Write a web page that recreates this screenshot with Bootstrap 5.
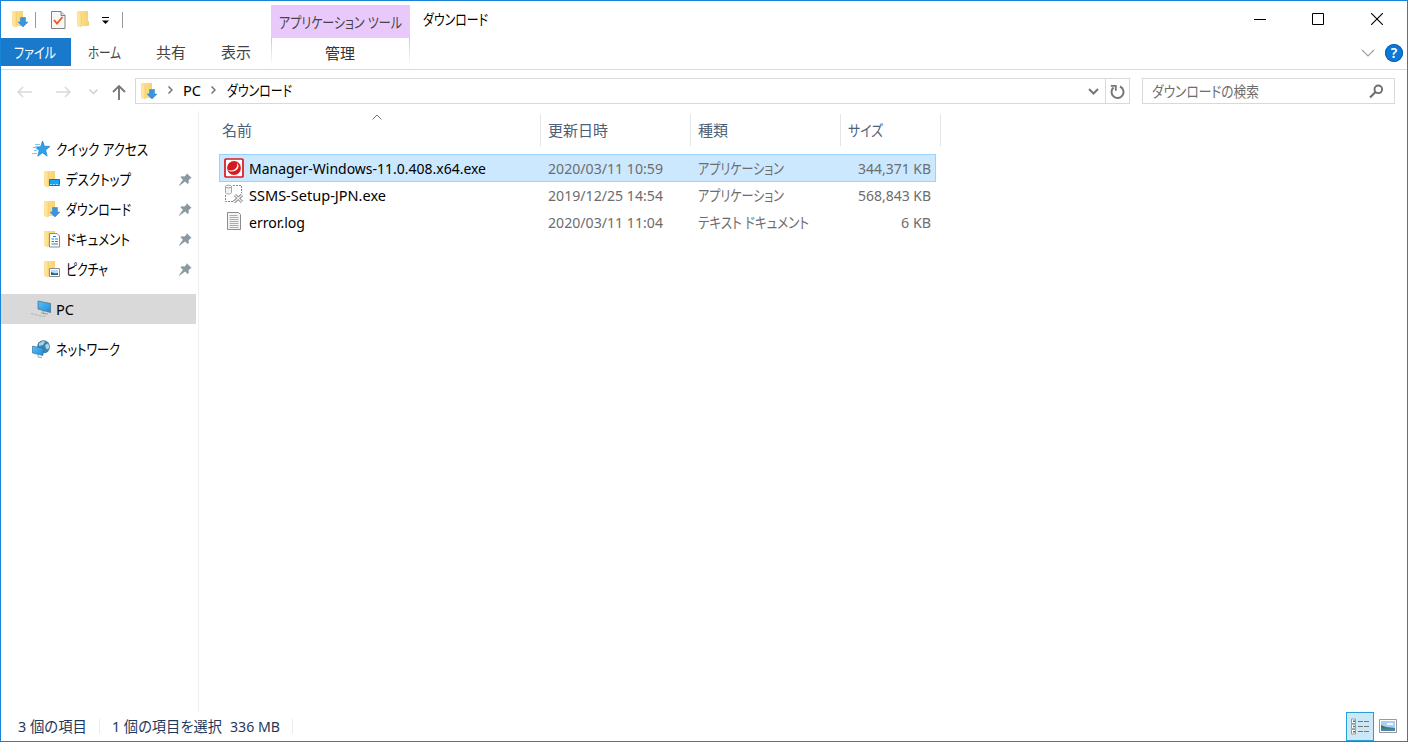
<!DOCTYPE html>
<html lang="ja">
<head>
<meta charset="utf-8">
<title>ダウンロード</title>
<link href="https://cdn.jsdelivr.net/npm/bootstrap@5.3.0/dist/css/bootstrap.min.css" rel="stylesheet">
<style>
body{font-family:"Noto Sans","Noto Sans CJK JP",sans-serif;font-size:15px;font-weight:400;line-height:20px;color:#000;background:#fff}
svg{display:block;flex:none}
.window{width:1408px;height:742px;border:1px solid #1883d7;overflow:hidden}
.fit{display:inline-block;white-space:pre;transform-origin:0 50%;font-feature-settings:"palt";flex:none}
.slot{display:block;flex:none;height:20px;white-space:nowrap}
.top-area{height:69px;border-bottom:1px solid #dadbdc}
.left-top{width:270px}
.quick{height:37px;padding-left:11px}
.bar{width:1px;height:16px;background:#999}
.gap-a{margin-left:6px}.gap-b{margin-left:15px}.gap-c{margin-left:12px}
.tabs{height:28px;color:#444}
.file-tab{width:70px;height:28px;background:#1979ca;color:#fff;padding:4px 0 0 13px}
.tool-group{width:139px}
.tool-title{height:33px;margin-top:4px;background:#e9c9fc;color:#444;padding:7px 0 0 8px}
.tool-tab{height:27px;padding:5px 0 0 53px;color:#333;border:solid;border-width:0 1px;border-image:linear-gradient(#c8c8c8,#fff) 1}
.win-buttons{height:36px}
.help{width:18px;height:18px;border-radius:50%;background:#0b78d7;box-shadow:inset 0 0 0 1px #075fae;color:#fff;font-weight:600;font-size:14px;line-height:18px}
.address-row{height:41px;padding-top:8px}
.boxed{height:26px;border:1px solid #d9d9d9}
.address{width:995px}
.address .slot{margin-top:-2px}
.refresh{width:24px;height:24px;border-left:1px solid #d9d9d9}
.search{width:253px;color:#6d6d6d}
.content{height:601px}
.side{width:198px;padding-top:23px;border-right:1px solid #f0f0f0;height:601px}
.side-row{height:30px;width:195px}
.side-row.selected{background:#d9d9d9}
.files{width:740px;margin-left:20px}
.heads{height:35px;color:#4c607a;padding-top:3px;margin-bottom:8px}
.head{height:32px;border-right:1px solid #e5e5e5;width:150px;padding:6px 0 0 7px}
.head-name{width:322px;padding-left:3px}
.head-size{width:100px}
.sort-mark{left:153px;top:0}
.file-row{height:27px;width:717px;border:1px solid transparent;color:#6d6d6d;padding:0 4px}
.file-row.selected{height:28px;background:#cce8ff;border-color:#99d1ff;margin-bottom:-1px}
.c-icon{width:25px}.c-name{width:299px;color:#000}.c-date{width:150px}.c-type{width:150px}
.status{height:29px;color:#1e395b;padding-left:17px}
.status .slot{height:22px}
.tick{width:1px;height:15px;background:#ececec}
.view-on{width:28px;height:29px;background:#cce8f6;border:1px solid #26a0da}
</style>
</head>
<body>
<svg width="0" height="0" class="position-absolute">
<defs>
<linearGradient id="gf" x1="0" x2="1"><stop offset="0" stop-color="#fde39a"/><stop offset="1" stop-color="#f6d06c"/></linearGradient>
<linearGradient id="gs" x1="0" y1="0" x2="1" y2="1"><stop offset="0" stop-color="#5cc0f8"/><stop offset="1" stop-color="#1590e0"/></linearGradient>
<symbol id="folder" viewBox="0 0 17 17"><path d="M0 0h11v10h1v5H1z" fill="url(#gf)"/><path d="M0 0l4 1.500v15L0 15z" fill="#fde49a"/><path d="M4.200 1.500V16" stroke="#efc960" stroke-width=".7"/></symbol>
<symbol id="downfolder" viewBox="0 0 17 17"><use href="#folder" width="17" height="17"/><path d="M8.500 6.500h5V11H16l-5 5-5-5h2.500z" fill="#3b94dd" stroke="#2c7fca" stroke-width=".5"/></symbol>
<symbol id="pin" viewBox="0 0 12 12"><path d="M7.200.3l4.500 4.300-1.300.5-1.500 1.600.1 2.500-1 1-2.400-2.300L.4 11.800 0 11.400l3.600-5.100-2.200-2.400 1-.8 2.700.1 1.600-1.500z" fill="#8b99a3"/></symbol>
</defs>
</svg>
<div class="window d-flex flex-column">
  <header class="top-area d-flex">
    <div class="left-top">
      <div class="quick d-flex align-items-center">
        <svg width="17" height="17"><use href="#downfolder"/></svg>
        <span class="bar gap-a"></span>
        <svg width="15" height="18" class="gap-b" viewBox="0 0 15 18"><path d="M.5.500h9.500l4 4v13H.5z" fill="#f7f7f7" stroke="#828282"/><path d="M10 .5v4h4" fill="#ddd" stroke="#828282"/><path d="M3 9l3 3.500 5.500-6.500" fill="none" stroke="#f05a22" stroke-width="1.900"/></svg>
        <svg width="17" height="17" style="margin-left:11px"><use href="#folder"/></svg>
        <svg width="8" height="8" style="margin-left:8px;margin-top:2px"><path d="M0 .5h7" stroke="#000"/><path d="M0 3.500h7L3.500 7z"/></svg>
        <span class="bar gap-c"></span>
      </div>
      <div class="tabs d-flex">
        <div class="file-tab"><span class="fit" data-w="42">ファイル</span></div>
        <div class="slot" style="margin:4px 0 0 17px;width:68px"><span class="fit" data-w="33">ホーム</span></div>
        <div class="slot" style="margin-top:4px;width:65px"><span class="fit" data-w="30">共有</span></div>
        <div class="slot" style="margin-top:4px"><span class="fit" data-w="30">表示</span></div>
      </div>
    </div>
    <div class="tool-group">
      <div class="tool-title"><span class="fit" data-w="123">アプリケーション ツール</span></div>
      <div class="tool-tab"><span class="fit" data-w="30">管理</span></div>
    </div>
    <div class="slot" style="margin:8px 0 0 13px"><span class="fit" data-w="65">ダウンロード</span></div>
    <div class="ms-auto">
      <div class="win-buttons d-flex align-items-center justify-content-end" style="padding-right:24px">
        <svg width="12" height="13"><path d="M0 6.500h12" stroke="#000"/></svg>
        <svg width="12" height="12" style="margin-left:46px"><path d="M.5.500h11v11H.5z" fill="none" stroke="#000"/></svg>
        <svg width="12" height="12" style="margin-left:47px"><path d="M0 0l12 12M12 0L0 12" stroke="#000" stroke-width="1.100"/></svg>
      </div>
      <div class="d-flex align-items-center justify-content-end" style="padding:7px 4px 0 0">
        <svg width="14" height="8" style="margin-right:10px"><path d="M1 1l6 6 6-6" fill="none" stroke="#a0a0a0" stroke-width="1.200"/></svg>
        <span class="help text-center">?</span>
      </div>
    </div>
  </header>
  <div class="address-row d-flex">
    <div class="d-flex align-items-center" style="width:134px;height:28px;padding-left:16px">
      <svg width="15" height="12"><path d="M15 6H1M6 1L1 6l5 5" fill="none" stroke="#d8d8d8" stroke-width="1.500"/></svg>
      <svg width="15" height="12" style="margin-left:24px"><path d="M0 6h14M9 1l5 5-5 5" fill="none" stroke="#d8d8d8" stroke-width="1.500"/></svg>
      <svg width="9" height="6" style="margin-left:18px"><path d="M.5.500l4 4 4-4" fill="none" stroke="#d0d0d0" stroke-width="1.500"/></svg>
      <svg width="14" height="16" style="margin-left:14px"><path d="M7 16V2M1 8l6-6 6 6" fill="none" stroke="#777" stroke-width="1.900"/></svg>
    </div>
    <div class="boxed address d-flex align-items-center">
      <svg width="17" height="17" style="margin-left:5px"><use href="#downfolder"/></svg>
      <svg width="5" height="8" style="margin:-2px 0 0 10px"><path d="M.5.500L4 4 .5 7.500" fill="none" stroke="#777" stroke-width="1.500"/></svg>
      <div class="slot" style="margin-left:10px;width:28px"><span class="fit" data-w="18">PC</span></div>
      <svg width="5" height="8" style="margin-top:-2px"><path d="M.5.500L4 4 .5 7.500" fill="none" stroke="#777" stroke-width="1.500"/></svg>
      <div class="slot" style="margin-left:11px"><span class="fit" data-w="65">ダウンロード</span></div>
      <svg width="11" height="8" class="ms-auto" style="margin-right:6px;margin-top:2px"><path d="M1 1l4.500 4.500L10 1" fill="none" stroke="#777" stroke-width="2"/></svg>
      <div class="refresh d-flex align-items-center justify-content-center"><svg width="15" height="15"><path d="M10 2.500A6 6 0 1 1 3.500 3.500" fill="none" stroke="#777" stroke-width="2"/><path d="M.8 1.800h5v5" fill="none" stroke="#777" stroke-width="1.800"/></svg></div>
    </div>
    <div class="boxed search d-flex align-items-center" style="margin-left:12px">
      <div class="slot" style="margin-left:9px"><span class="fit" data-w="107">ダウンロードの検索</span></div>
      <svg width="15" height="15" class="ms-auto" style="margin-right:10px"><circle cx="9.300" cy="5.300" r="3.800" fill="none" stroke="#6d6d6d" stroke-width="1.900"/><path d="M6.500 8L1 13.500" stroke="#6d6d6d" stroke-width="2.200"/></svg>
    </div>
  </div>
  <main class="content d-flex">
    <nav class="side">
      <div class="side-row d-flex align-items-center" style="padding-left:31px">
        <svg width="18" height="16"><path d="M10.500 0l1.900 5.200 5.600.2-4.400 3.700 1.600 6-4.800-3.300-4.700 3.400 1.600-5.800-4.100-3.300 5.500-.3z" fill="#2da2ec" stroke="#1180cb" stroke-width=".7"/><path d="M3 3.500h5M1 6.500h4M2 9.500h3M0 12.500h5" stroke="#81c6f3"/></svg>
        <div class="slot" style="margin-left:6px"><span class="fit" data-w="92">クイック アクセス</span></div>
      </div>
      <div class="side-row d-flex align-items-center" style="padding-left:43px">
        <svg width="17" height="17"><use href="#folder"/><path d="M5.500 8.500h10v6h-10z" fill="#17a4fa" stroke="#0b73b8"/><path d="M6 13.500h9.500" stroke="#b2e0fc" stroke-dasharray="2 1"/></svg>
        <div class="slot" style="margin-left:5px;width:113px"><span class="fit" data-w="65">デスクトップ</span></div><svg width="13" height="13"><use href="#pin"/></svg>
      </div>
      <div class="side-row d-flex align-items-center" style="padding-left:43px">
        <svg width="17" height="17"><use href="#downfolder"/></svg>
        <div class="slot" style="margin-left:5px;width:113px"><span class="fit" data-w="65">ダウンロード</span></div><svg width="13" height="13"><use href="#pin"/></svg>
      </div>
      <div class="side-row d-flex align-items-center" style="padding-left:43px">
        <svg width="17" height="17"><use href="#folder"/><path d="M5.500 2.500h7.500l2.500 2.500v11h-10z" fill="#fff" stroke="#8b8b8b"/><path d="M9 5.500h3M7.500 8h2.500M11 8h3M7.500 10.500h2.500M11 10.500h3M7.500 13h6.500" stroke="#2584cc" stroke-width="1.200"/></svg>
        <div class="slot" style="margin-left:5px;width:113px"><span class="fit" data-w="64">ドキュメント</span></div><svg width="13" height="13"><use href="#pin"/></svg>
      </div>
      <div class="side-row d-flex align-items-center" style="padding-left:43px">
        <svg width="17" height="17"><use href="#folder"/><path d="M5.500 7.500h10v8h-10z" fill="#fff" stroke="#8b8b8b"/><path d="M7 9h7v5H7z" fill="#b8dcf8"/><path d="M7 11l4 1.500 3-.5v2H7z" fill="#2c6289"/></svg>
        <div class="slot" style="margin-left:5px;width:113px"><span class="fit" data-w="42">ピクチャ</span></div><svg width="13" height="13"><use href="#pin"/></svg>
      </div>
      <div class="side-row selected d-flex align-items-center" style="margin-top:10px;padding-left:30px">
        <svg width="20" height="18"><path d="M7 1l12.500 2.500v9L7 9z" fill="url(#gs)" stroke="#54718a" stroke-width=".8"/><path d="M12 11l1 2.500-3-.5m3 .5l4 .5" fill="none" stroke="#8f9ba5"/><path d="M0 13.500l12 3 3-1" fill="none" stroke="#a9b3ba" stroke-dasharray="3 1"/></svg>
        <div class="slot" style="margin-left:5px"><span class="fit" data-w="18">PC</span></div>
      </div>
      <div class="side-row d-flex align-items-center" style="margin-top:10px;padding-left:31px">
        <svg width="18" height="18"><circle cx="11.500" cy="6.800" r="6.500" fill="#3e82ad"/><path d="M7 3.500l4-2.500 2 1-2 3-4 1zM13 5l3-1.500 1.500 3-1.500 3-2-1z" fill="#a8d6e6"/><path d="M.5 6l10.500 2.500v7L.5 13z" fill="url(#gs)" stroke="#41769e" stroke-width=".7"/><path d="M6 14.500v2.500l4 .5" fill="none" stroke="#9aa7b0"/></svg>
        <div class="slot" style="margin-left:6px"><span class="fit" data-w="64">ネットワーク</span></div>
      </div>
    </nav>
    <section class="files">
      <div class="heads d-flex">
        <div class="head head-name position-relative"><span class="fit" data-w="30">名前</span><svg width="10" height="6" class="position-absolute sort-mark"><path d="M.5 5.500L5 1l4.500 4.500" fill="none" stroke="#777"/></svg></div>
        <div class="head"><span class="fit" data-w="60">更新日時</span></div>
        <div class="head"><span class="fit" data-w="30">種類</span></div>
        <div class="head head-size"><span class="fit" data-w="35">サイズ</span></div>
      </div>
      <div class="file-row selected d-flex align-items-center">
        <div class="c-icon"><svg width="20" height="20"><rect x="1" y="1" width="18" height="18" rx="1" fill="#fff" stroke="#d71920" stroke-width="1.700"/><circle cx="10" cy="10" r="6.900" fill="#d71920"/><path d="M3 11.200c3.500 2.600 9.300 1.200 10.200-3.700.2-1.200-.1-2-.7-2.800 2.300 1.300 2.600 3.800 1.300 5.800-2.400 3.700-8.300 4-10.800.7z" fill="#fff"/></svg></div>
        <div class="slot c-name"><span class="fit" data-w="237">Manager-Windows-11.0.408.x64.exe</span></div>
        <div class="slot c-date"><span class="fit" data-w="115">2020/03/11 10:59</span></div>
        <div class="slot c-type"><span class="fit" data-w="86">アプリケーション</span></div>
        <div class="slot ms-auto"><span class="fit" data-w="73">344,371 KB</span></div>
      </div>
      <div class="file-row d-flex align-items-center">
        <div class="c-icon"><svg width="20" height="22"><path d="M1.500 2.500v6c0 2 6 2 6 0v-6" fill="#f2f2f2" stroke="#a5a5a5"/><ellipse cx="4.500" cy="2.500" rx="3" ry="1.300" fill="#fff" stroke="#999"/><path d="M9 1.500h8.500V9M1.500 11v6.500H9" fill="none" stroke="#888" stroke-dasharray="2 1"/><path d="M10 18l8-7M11 11l7 7" stroke="#888" stroke-width="3"/><path d="M10 18l8-7M11 11l7 7" stroke="#eee" stroke-width="1.200"/></svg></div>
        <div class="slot c-name"><span class="fit" data-w="137">SSMS-Setup-JPN.exe</span></div>
        <div class="slot c-date"><span class="fit" data-w="115">2019/12/25 14:54</span></div>
        <div class="slot c-type"><span class="fit" data-w="86">アプリケーション</span></div>
        <div class="slot ms-auto"><span class="fit" data-w="73">568,843 KB</span></div>
      </div>
      <div class="file-row d-flex align-items-center">
        <div class="c-icon"><svg width="20" height="20"><path d="M3.500.500h11l2 2v15h-13z" fill="#f5f5f5" stroke="#8c8c8c"/><path d="M5.500 3.500h8M5.500 5.500h9M5.500 7.500h9M5.500 9.500h9M5.500 11.500h9M5.500 13.500h9M5.500 15.500h9" stroke="#aaa"/></svg></div>
        <div class="slot c-name"><span class="fit" data-w="56">error.log</span></div>
        <div class="slot c-date"><span class="fit" data-w="115">2020/03/11 11:04</span></div>
        <div class="slot c-type"><span class="fit" data-w="111">テキスト ドキュメント</span></div>
        <div class="slot ms-auto"><span class="fit" data-w="30">6 KB</span></div>
      </div>
    </section>
  </main>
  <footer class="status d-flex align-items-center">
    <div class="slot" style="width:81px"><span class="fit" data-w="69">3 個の項目</span></div>
    <span class="tick"></span>
    <div class="slot" style="margin-left:12px;width:118px"><span class="fit" data-w="110">1 個の項目を選択</span></div>
    <div class="slot" style="width:62px"><span class="fit" data-w="50">336 MB</span></div>
    <span class="tick"></span>
    <div class="view-on ms-auto d-flex align-items-center justify-content-center"><svg width="18" height="17"><path d="M.5 1h4v4.500h-4zM.5 6.200h4v4.500h-4zM.5 11.500h4V16h-4z" fill="#fff" stroke="#999"/><path d="M2 3.300h2" stroke="#267db5" stroke-width="1.500"/><path d="M2 8.500h2" stroke="#2b9585" stroke-width="1.500"/><path d="M2 13.800h2" stroke="#d43d1c" stroke-width="1.500"/><path d="M7 3.500h5m1 0h5M7 8.500h5m1 0h5M7 13.500h5m1 0h5" stroke="#777"/></svg></div>
    <svg width="18" height="14" style="margin:-1px 10px 0 5px"><path d="M.5.500h17v13H.5z" fill="#fff" stroke="#999"/><path d="M2 2h14v10H2z" fill="#a6d1f5"/><path d="M2 6l5 2 9 1v1H2z" fill="#45775e"/><path d="M2 9.500h14V12H2z" fill="#4b83b4"/><path d="M8 4h6v2H8z" fill="#f2faff"/></svg>
  </footer>
</div>
<script src="https://cdn.jsdelivr.net/npm/bootstrap@5.3.0/dist/js/bootstrap.bundle.min.js"></script>
<script>
document.querySelectorAll('.fit').forEach(function (el) {
  var natural = el.getBoundingClientRect().width, w = +el.dataset.w;
  el.style.transform = 'scaleX(' + w / natural + ')';
  el.style.marginRight = (w - natural) + 'px';
});
</script>
</body>
</html>
